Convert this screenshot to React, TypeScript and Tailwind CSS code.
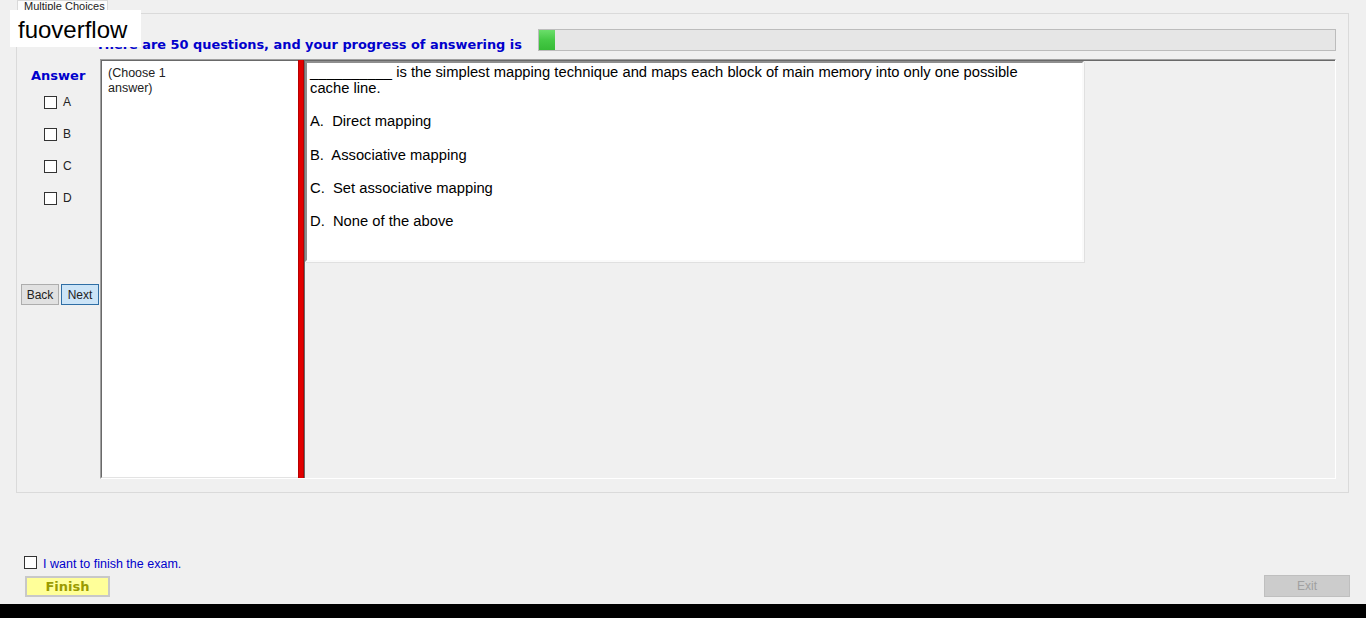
import React from "react";

const options = ["A", "B", "C", "D"];

function Box() {
    return <div className="w-[13px] h-[13px] bg-white border border-[#333333] shrink-0" />;
}

export default function App() {
    return (
        <div className="relative w-[1366px] h-[618px] bg-[#f0f0f0] flex flex-col overflow-hidden font-['Liberation_Sans',Arial,sans-serif] text-black">
            {/* tab strip */}
            <div className="h-[13px] pl-[17px] flex">
                <div className="w-[91px] h-[13px] bg-[#fcfcfc] border-x border-t border-[#d9d9d9] pl-[6px] text-[11px] leading-[11px] text-[#222] overflow-hidden whitespace-nowrap">
                    Multiple Choices
                </div>
            </div>

            {/* tab page */}
            <div className="ml-[16px] w-[1333px] h-[480px] border border-[#dadada] pt-[15px] pl-[3px] pr-[12px] flex flex-col">
                <div className="h-[22px] flex">
                    <div className="w-[80px] shrink-0" />
                    <div className="ml-[-4px] mt-[8px] font-['DejaVu_Sans',sans-serif] font-bold text-[12.9px] leading-[16px] text-[#0000cc] whitespace-nowrap">
                        There are 50 questions, and your progress of answering is
                    </div>
                    <div className="ml-auto w-[798px] h-[22px] border border-[#bcbcbc] bg-[#e6e6e6] flex">
                        <div className="w-[16px] h-full bg-gradient-to-b from-[#6ade6a] via-[#45c945] to-[#36bb36]" />
                    </div>
                </div>

                <div className="mt-[8px] h-[420px] flex">
                    {/* answer column */}
                    <div className="w-[80px] shrink-0 flex flex-col">
                        <div className="pl-[11px] pt-[9px] font-['DejaVu_Sans',sans-serif] font-bold text-[13px] leading-[15px] text-[#0000cc]">
                            Answer
                        </div>
                        <div className="mt-[13px] pl-[24px] flex flex-col">
                            {options.map((o) => (
                                <div key={o} className="h-[32px] flex items-start gap-[6px]">
                                    <Box />
                                    <span className="text-[12px] leading-[13px] text-[#222]">{o}</span>
                                </div>
                            ))}
                        </div>
                        <div className="mt-[60px] ml-[1px] flex gap-[2px]">
                            <button className="w-[38px] h-[21px] bg-[#e1e1e1] border border-[#adadad] text-[12px] leading-none text-[#222]">
                                Back
                            </button>
                            <button className="w-[38px] h-[21px] bg-[#cce4f7] border border-[#2f6ea5] text-[12px] leading-none text-[#222]">
                                Next
                            </button>
                        </div>
                    </div>

                    {/* split container */}
                    <div className="flex-1 flex border-t border-l border-[#a0a0a0] border-r border-b border-r-white border-b-white">
                        <div className="w-[197px] shrink-0 bg-white border-t border-l border-[#696969] border-b border-b-[#e3e3e3] pl-[6px] pt-[5px] text-[12.5px] leading-[15px] text-[#222]">
                            (Choose 1
                            <br />
                            answer)
                        </div>
                        <div className="w-[6px] shrink-0 bg-[#e10000] border-x border-[#b80000]" />
                        <div className="flex-1 border-t border-l border-[#696969]">
                            <div className="w-[779px] h-[201px] bg-white border-2 border-t-[#8e8e8e] border-l-[#8e8e8e] border-r-[#fafafa] border-b-[#fafafa] shadow-[1px_1px_0_#e0e0e0] pl-[3px] pt-[1px] text-[14.75px] leading-[16px]">
                                <div className="whitespace-pre">__________ is the simplest mapping technique and maps each block of main memory into only one possible</div>
                                <div>cache line.</div>
                                <div className="mt-[17px] whitespace-pre">A.  Direct mapping</div>
                                <div className="mt-[18px] whitespace-pre">B.  Associative mapping</div>
                                <div className="mt-[17px] whitespace-pre">C.  Set associative mapping</div>
                                <div className="mt-[17px] whitespace-pre">D.  None of the above</div>
                            </div>
                        </div>
                    </div>
                </div>
            </div>

            {/* bottom */}
            <div className="flex-1 flex justify-between items-end pl-[24px] pr-[16px] pb-[7px]">
                <div className="flex flex-col">
                    <div className="h-[13px] flex items-start gap-[6px]">
                        <Box />
                        <span className="mt-[1px] text-[12.5px] leading-[15px] text-[#0000cc]">I want to finish the exam.</span>
                    </div>
                    <button className="mt-[7px] ml-[1px] w-[85px] h-[21px] bg-[#ffff99] border-2 border-[#c8c8c8] font-['DejaVu_Sans',sans-serif] font-bold text-[13px] leading-none text-[#9a9a00]">
                        Finish
                    </button>
                </div>
                <button className="w-[86px] h-[22px] bg-[#cccccc] border border-[#bfbfbf] text-[12px] leading-none text-[#a0a0a0]">
                    Exit
                </button>
            </div>
            <div className="h-[14px] bg-black shrink-0" />

            {/* overlay label */}
            <div className="absolute left-[10px] top-[10px] w-[131px] h-[37px] bg-white pl-[8px] pt-[3px] text-[24px] leading-[34px] text-black">
                fuoverflow
            </div>
        </div>
    );
}
